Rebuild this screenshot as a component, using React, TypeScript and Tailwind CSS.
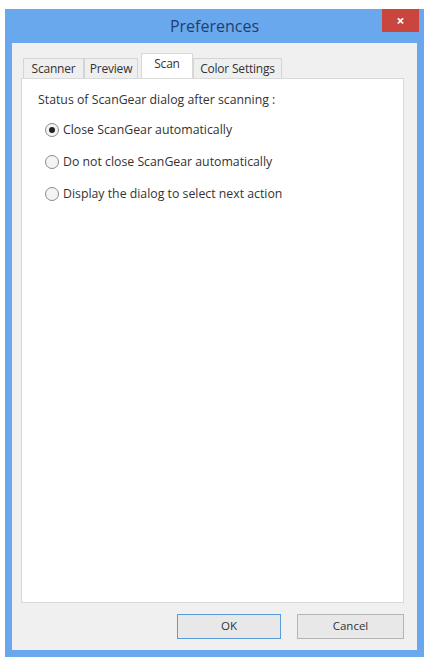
import { useState } from "react";

const tabs = ["Scanner", "Preview", "Scan", "Color Settings"];

const options = [
  "Close ScanGear automatically",
  "Do not close ScanGear automatically",
  "Display the dialog to select next action",
];

function Radio({ checked }: { checked: boolean }) {
  return (
    <span className="flex h-[14px] w-[14px] shrink-0 items-center justify-center rounded-full border border-[#8a8a8a] bg-[#f4f4f4]">
      {checked && <span className="h-[6px] w-[6px] rounded-full bg-[#222]" />}
    </span>
  );
}

export default function App() {
  const [active] = useState("Scan");
  const [choice, setChoice] = useState(0);

  return (
    <div className="h-[660px] w-[428px] bg-white pl-[5px] pt-[9px] font-['Open_Sans',sans-serif] text-[#333]">
      <div className="flex h-[648px] w-[419px] flex-col bg-[#6aa8ee]">
        {/* title bar */}
        <div className="relative flex h-[34px] items-center justify-center">
          <span className="text-[16px] text-[#1f3f6e]">Preferences</span>
          <button className="absolute right-[5px] top-0 flex h-[23px] w-[37px] items-center justify-center bg-[#c9453d] text-[14px] font-bold leading-none text-white">
            ×
          </button>
        </div>

        {/* client area */}
        <div className="mx-[7px] mb-[7px] flex flex-1 flex-col bg-[#f0f0f0] pl-[9px] pr-[13px] pt-[10px]">
          <div className="flex h-[25px] items-end pl-[2px] text-[12px] tracking-[-0.2px]">
            {tabs.map((t, i) => {
              const sel = t === active;
              const w = ["w-[61px]", "w-[54px]", "w-[52px]", "w-[89px]"][i];
              return (
                <div
                  key={t}
                  className={
                    sel
                      ? `${w} ml-[3px] flex h-[25px] items-start justify-center border border-b-0 border-[#d9d9d9] bg-white pt-[1px]`
                      : `${w} flex h-[20px] items-center justify-center border border-b-0 border-[#d4d4d4] bg-[#efefef]`
                  }
                >
                  {t}
                </div>
              );
            })}
          </div>

          <div className="flex h-[525px] flex-col border border-[#d9d9d9] bg-white pl-[16px] pt-[13px] text-[12.3px]">
            <div className="leading-[16px]">Status of ScanGear dialog after scanning :</div>
            <div className="mt-[14px] flex flex-col gap-[16px] pl-[7px]">
              {options.map((o, i) => (
                <label
                  key={o}
                  onClick={() => setChoice(i)}
                  className="flex h-[16px] cursor-default items-center gap-[4px]"
                >
                  <Radio checked={choice === i} />
                  <span>{o}</span>
                </label>
              ))}
            </div>
          </div>

          <div className="flex flex-1 items-center justify-end gap-[16px] pb-[1px] text-[11.5px]">
            <button className="h-[25px] w-[104px] border border-[#5b9bd8] bg-[#e8e8e8]">OK</button>
            <button className="h-[25px] w-[107px] border border-[#b4b4b4] bg-[#e8e8e8]">Cancel</button>
          </div>
        </div>
      </div>
    </div>
  );
}
